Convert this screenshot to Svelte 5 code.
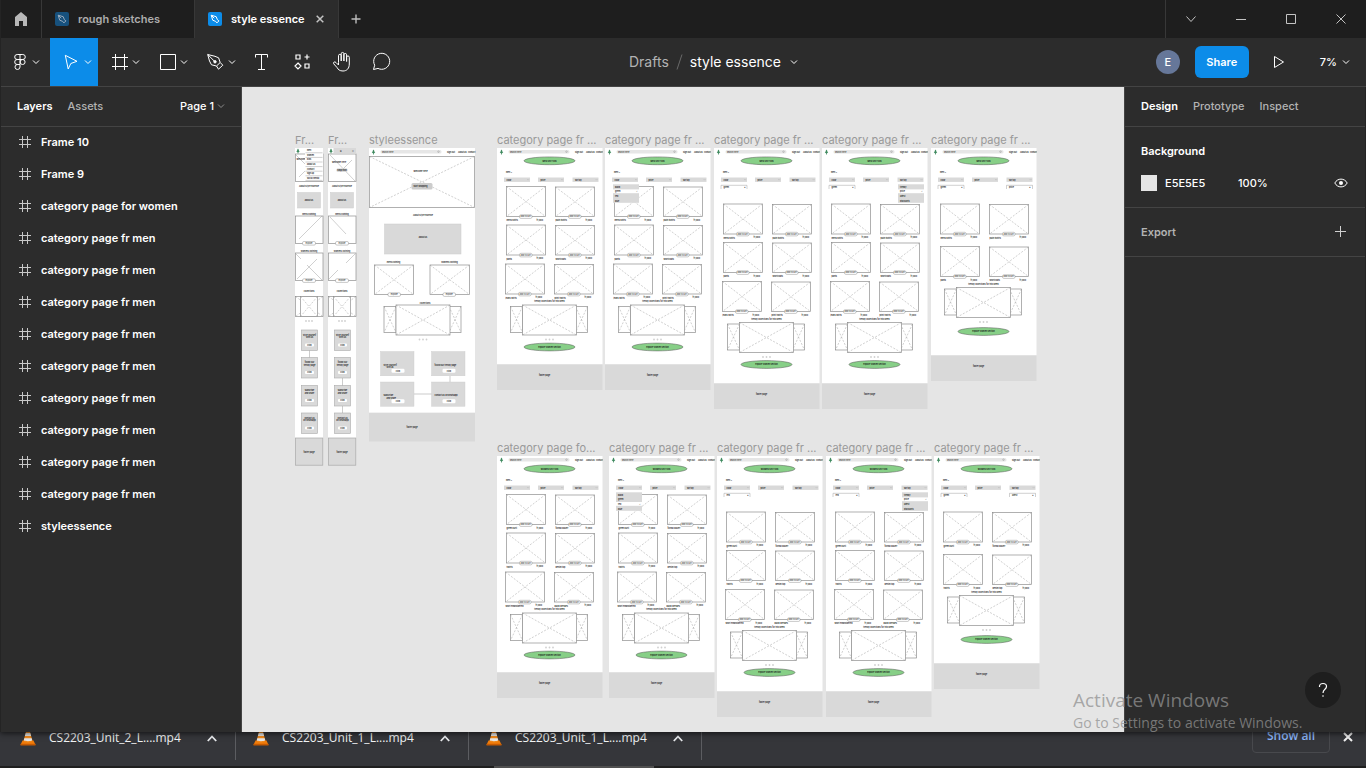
<script>
  const layers = [
    'Frame 10', 'Frame 9', 'category page for women',
    ...Array(9).fill('category page fr men'), 'styleessence'
  ];
  const downloads = ['CS2203_Unit_2_L....mp4', 'CS2203_Unit_1_L....mp4', 'CS2203_Unit_1_L....mp4'];

  const shortRows = [38.5, 77, 116];
  const tallRows = [56, 94.5, 133.5];
  const pairRows = [56, 98.5];
  const mens = ['MEN SECTION', 'mens shirts', 'plain tshirts', 'pants', 'shortcoats', 'jeans shirts', 'print tshirts'];
  const womens = ['WOMEN SECTION', 'green kurti', 'formal blazer', 'tshirts', 'denim top', 'short embroidered', 'black dresses'];
  const colours = ['black', 'green', 'red', 'blue'];
  const sorts = ['trendy', 'price', 'latest', 'discounts'];

  const boards = [
    { x: 255, y: 61, name: 'category page fr ...', words: mens, rows: shortRows, top: 157, end: 216, h: 242 },
    { x: 363, y: 61, name: 'category page fr ...', words: mens, rows: shortRows, top: 157, end: 216, h: 242, menuX: 8, menu: colours, active: 1 },
    { x: 472, y: 61, name: 'category page fr ...', words: mens, rows: tallRows, top: 174.5, end: 235, h: 261, chip: 'green' },
    { x: 580, y: 61, name: 'category page fr ...', words: mens, rows: tallRows, top: 174.5, end: 235, h: 261, chip: 'green', menuX: 76, menu: sorts, active: 1 },
    { x: 689, y: 61, name: 'category page fr ...', words: mens, rows: pairRows, top: 139.5, end: 207, h: 233, chip: 'green', chip2: 'price' },
    { x: 255, y: 369, name: 'category page fo...', words: womens, rows: shortRows, top: 157, end: 216, h: 242 },
    { x: 367, y: 369, name: 'category page fr ...', words: womens, rows: shortRows, top: 157, end: 216, h: 242, menuX: 7, menu: colours, active: 2 },
    { x: 475, y: 369, name: 'category page fr ...', words: womens, rows: tallRows, top: 174.5, end: 235, h: 261, chip: 'red' },
    { x: 584, y: 369, name: 'category page fr ...', words: womens, rows: tallRows, top: 174.5, end: 235, h: 261, chip: 'red', menuX: 76, menu: sorts, active: 1 },
    { x: 692, y: 369, name: 'category page fr ...', words: womens, rows: pairRows, top: 139.5, end: 207, h: 233, chip: 'green', chip2: 'latest' }
  ];
  const phoneBoxes = [182, 209.5, 237.5, 265];
  const steps = [
    ['style yourself', 'with us'], ['follow our', 'trendy page'], ['subscribe', 'and share'], ['contact us', 'on whatsapp']
  ];
</script>

{#snippet chevron(cls)}
  <svg class="chev {cls}" viewBox="0 0 8 8" aria-hidden="true"><path d="M1 2.5l3 3 3-3" /></svg>
{/snippet}

{#snippet leaf(x, y)}
  <path class="leaf" d="M{x} {y - 2.6}l1.2 2-.6.4 1.2 1-1.4.4v1.2h-.8v-1.2l-1.4-.4 1.200-1-.6-.4z" />
{/snippet}

{#snippet picture(x, y, w, h)}
  <rect class="pic" {x} {y} width={w} height={h} />
  <path class="cross" d="M{x} {y}l{w} {h}M{x + w} {y}l{-w} {h}" />
{/snippet}

{#snippet pill(x, y, w, text)}
  <rect class="pill" {x} {y} width={w} height="3.6" rx="1.4" />
  <text class="mid" x={x + w / 2} y={y + 2.6}>{text}</text>
{/snippet}

{#snippet gallery(x, y)}
  {@render picture(x, y + 1.5, 12, 26)}
  {@render picture(x + 65, y + 1.5, 12, 26)}
  <rect x={x + 12} {y} width="54" height="30" fill="#fff" />
  {@render picture(x + 12, y, 54, 30)}
  {#each [36, 39.5, 43] as d}
    <circle class="dot" cx={x + d - 0.5} cy={y + 34.5} r=".9" />
  {/each}
{/snippet}

{#snippet pageTop()}
  {@render leaf(4.5, 4)}
  <rect class="search" x="11.5" y="2" width="61" height="3.6" rx="1.6" />
  <text x="13" y="4.6">search here</text>
  <circle class="line" cx="69.5" cy="3.7" r=".8" />
  <text class="dark" x="78" y="4.6">Sign out</text>
  <text class="dark" x="89" y="4.6">About us</text>
  <text class="dark" x="99" y="4.6">contact</text>
{/snippet}

{#snippet category(b)}
  <svg width="106" height={b.h} viewBox="0 0 106 {b.h}">
    <rect width="105.5" height={b.end} fill="#fff" />
    <rect y={b.end + 0.7} width="105.5" height={b.h - b.end - 0.7} fill="#d9d9d9" />
    {@render pageTop()}
    <ellipse class="badge" cx="52.5" cy="12.8" rx="25.5" ry="3.9" />
    <text class="mid dark" x="52.5" y="13.7">{b.words[0]}</text>
    <text class="dark" x="9" y="25">men &gt;</text>
    {#each ['color', 'price', 'sort by'] as f, i}
      <rect x={[7, 41, 75.5][i]} y="29.5" width="26" height="4.4" fill="#d9d9d9" />
      <text class="dark" x={[9.5, 43.5, 78][i]} y="32.5">{f}</text>
      <path class="line" d="M{[30.5, 64.5, 99][i]} 31.5l.6.6.6-.6" />
    {/each}
    {#each [[b.chip, 7], [b.chip2, 75.5]] as [label, x]}
      {#if label}
        <path class="line" d="M{x} 41v-3.7h26v3.7" />
        <text class="dark" x={x + 2.5} y="39.8">{label}</text>
        <text class="dark" x={x + 22.5} y="39.9">✕</text>
      {/if}
    {/each}
    {#each b.rows as y, i}
      {#each [9.5 - (i === 2 ? 1 : 0), 58.5 - (i === 2 ? 1 : 0)] as x, j}
        {@render picture(x, y + (j ? 0.5 : 0), 39, 30 - (j ? 0.5 : 0))}
        {@render pill(x + 13, y + 28.3, 12.5, 'add to cart')}
        <text class="dark" {x} y={y + 34.5}>{b.words[1 + i * 2 + j]}</text>
        <text class="dark" x={x + 30} y={y + 34}>₹1,000</text>
      {/each}
    {/each}
    <text class="mid dark" x="52.5" y={b.top - 2.6}>trendy collections for this week</text>
    {@render gallery(13.5, b.top)}
    <ellipse class="badge" cx="52.5" cy={b.top + (b.chip2 ? 44 : 42)} rx="25.5" ry="3.9" />
    <text class="mid dark" x="52.5" y={b.top + (b.chip2 ? 44.9 : 42.9)}>explore women section</text>
    <text class="mid dark" x="47.5" y={b.end + 11.5}>footer page</text>
    {#if b.menu}
      <rect x={b.menuX} y="36.3" width="26" height="18.5" fill="#d9d9d9" />
      <rect x={b.menuX} y={36.8 + b.active * 4.6} width="26" height="3.8" fill="#fff" />
      {#each b.menu as item, i}
        <text class="dark" x={b.menuX + 2} y={39.8 + i * 4.6}>{item}</text>
      {/each}
      <text x={b.menuX + 22.5} y={39.8 + b.active * 4.6}>✕</text>
    {/if}
  </svg>
{/snippet}

{#snippet phone(second)}
  <svg width="29" height="318" viewBox="0 0 29 318">
    <rect width="28" height="290" fill="#fff" />
    {#if second}<rect x="5.5" width="22.5" height="5" fill="#d9d9d9" />{/if}
    {@render leaf(3, 3)}
    <rect class="pic" x=".5" y="6" width="27.5" height="27.5" />
    {#if second}
      <path class="cross solid" d="M2 7l25 26M24 12L12 24" />
      <text class="mid dark" x="11" y="15">Welcome Here</text>
      <rect x="8.5" y="20.5" width="11" height="3.2" rx="1.2" fill="#d0d0d0" />
      <text class="mid dark" x="14" y="22.9">shop now</text>
      <text class="dark" x="12" y="3.8">Q</text>
      <text class="dark" x="24" y="4">☰</text>
    {:else}
      <path class="cross solid" d="M1 7l9 9M4 29l6-6" />
      <text class="dark" x="1.5" y="12">Welcome</text>
      <rect x="10" y=".5" width="18" height="32.5" fill="#fff" />
      {#each ['men', 'women', 'kids', 'about us', 'contact', 'sign up', 'social media'] as item, i}
        <text class="dark" x="12" y={3.2 + i * 4.6}>{item}</text>
        <path class="line" d="M10.5 {4.8 + i * 4.6}h17" />
      {/each}
    {/if}
    <text class="mid dark" x="14" y="38.8">About Style Essence</text>
    <rect x="2.5" y="44.5" width="23" height="15.5" fill="#d9d9d9" stroke="#ccc" stroke-width=".5" />
    <text class="mid dark" x="14" y="52.5">about us</text>
    <text class="mid dark" x="14" y="66.8">mens clothing</text>
    <rect class="pic" x=".5" y="68" width="27.5" height="27.5" />
    <path class="cross solid" d={second ? 'M2 69l16 17' : 'M4 91l23-23'} />
    {@render pill(7.5, 93.5, 13, 'explore')}
    <text class="mid dark" x="14" y="104">womens clothing</text>
    <rect class="pic" x=".5" y="105" width="27.5" height="27.5" />
    <path class="cross solid" d={second ? 'M27 106l-9 9M10 122l-9 9' : 'M1 106l5 5M22 111L2 131M12 117l15 15'} />
    {@render pill(7.5, 130.8, 13, 'explore')}
    <text class="mid dark" x="14" y="143.5">collections</text>
    {@render picture(0.5, 148.5, 27.5, 20)}
    <rect x="5.5" y="148.5" width="17" height="20" fill="#fff" />
    {@render picture(5.5, 148.5, 17, 20)}
    {#each [11, 14, 17] as d}<circle class="dot" cx={d} cy="173" r=".9" />{/each}
    <path class="join" d={second ? 'M14.5 230v8M14.5 257v8' : 'M14.5 202v8'} />
    {#each phoneBoxes as y, i}
      <rect x="6.5" {y} width="16" height="20.5" fill="#d9d9d9" stroke="#aaa" stroke-width=".6" />
      <text class="mid dark" x="14.5" y={y + 5.5}>{steps[i][0]}</text>
      <text class="mid dark" x="14.5" y={y + 8.2}>{steps[i][1]}</text>
      <rect x="10" y={y + 13.5} width="9" height="3" rx="1" fill="#fff" />
      <text class="mid dark" x="14.5" y={y + 15.8}>click</text>
    {/each}
    <rect x=".4" y="290" width="27.4" height="27.2" fill="#d9d9d9" stroke="#aaa" stroke-width=".7" />
    <text class="mid dark" x="14" y="304.5">footer page</text>
  </svg>
{/snippet}

{#snippet home()}
  <svg width="107" height="294" viewBox="0 0 107 294">
    <rect width="106" height="264.5" fill="#fff" />
    <rect y="265" width="106" height="28.5" fill="#d9d9d9" />
    {@render pageTop()}
    {@render picture(0.5, 8.5, 105, 51)}
    <text class="mid dark" x="51.5" y="23.8">Welcome Here</text>
    <rect x="42.5" y="35" width="21" height="6.5" rx="1.5" fill="#ccc" />
    <text class="mid dark" x="51.5" y="39">start shopping</text>
    <text class="mid dark" x="54" y="67.8">About Style Essence</text>
    <rect x="15.5" y="76" width="76.5" height="30" fill="#d9d9d9" stroke="#ccc" stroke-width=".5" />
    <text class="mid dark" x="54" y="89.8">about us</text>
    <text class="mid dark" x="24.5" y="115">mens clothing</text>
    <text class="mid dark" x="80.5" y="115">womens clothing</text>
    {@render picture(5.5, 117, 39, 29.5)}
    {@render picture(61, 117, 39.5, 29.5)}
    {@render pill(19, 144.8, 12.5, 'explore')}
    {@render pill(74, 144.8, 12.5, 'explore')}
    <text class="mid dark" x="56" y="155.6">collections</text>
    {@render gallery(15, 157)}
    <path class="join" d="M81 228v6M45 246h18" />
    {#each [[11.5, 203.5], [62.5, 203.5], [11.5, 234], [62.5, 234]] as [x, y], i}
      <rect {x} {y} width="33.5" height="24.3" fill="#d9d9d9" stroke="#ccc" stroke-width=".4" />
      <text class="dark" x={x + 3} y={y + 14}>{steps[i][0]} {i % 2 ? steps[i][1] : ''}</text>
      {#if i % 2 === 0}<text class="dark" x={x + 6} y={y + 16.5}>{steps[i][1]}</text>{/if}
      <rect x={x + 11} y={y + 17.2} width="13" height="4" rx="1.2" fill="#fff" />
      <text class="mid dark" x={x + 17.5} y={y + 20}>click</text>
    {/each}
    <text class="mid dark" x="43" y="279.5">footer page</text>
  </svg>
{/snippet}

{#snippet nib()}
  <path d="M3.200 3.200l1.500 5 3 1.200 1.200 1.500 2-2-1.500-1.200-1.200-3zM3.200 3.200l3 3" />
{/snippet}

<div class="screen">
  <div class="window">
    <div class="titlebar">
      <button class="home" aria-label="Home">
        <svg width="14" height="14" viewBox="0 0 14 14"><path d="M7 0L13 5v9H9V9H5v5H1V5z" fill="#b8b8b8" /></svg>
      </button>
      <button class="tab">
        <svg class="file dim" width="14" height="14" viewBox="0 0 14 14"><rect width="14" height="14" rx="2" fill="#17517d" />{@render nib()}</svg>
        <span>rough sketches</span>
      </button>
      <div class="tab active">
        <svg class="file" width="14" height="14" viewBox="0 0 14 14"><rect width="14" height="14" rx="2" fill="#0c8ce9" />{@render nib()}</svg>
        <span>style essence</span>
        <button class="close" aria-label="Close tab"><svg width="8" height="8" viewBox="0 0 8 8"><path d="M.7.7l6.600 6.600M7.300.7L.7 7.300" stroke="#c4c4c4" stroke-width="1.500" /></svg></button>
      </div>
      <button class="new" aria-label="New tab"><svg width="10" height="10" viewBox="0 0 10 10"><path d="M5 .5v9M.5 5h9" stroke="#bdbdbd" stroke-width="1.400" /></svg></button>
      <div class="winbtns">
        <button aria-label="Tab list"><svg viewBox="0 0 10 10"><path d="M.5 2.500L5 7.500l4.500-5" /></svg></button>
        <button aria-label="Minimize"><svg viewBox="0 0 10 10"><path d="M0 5.500h10" /></svg></button>
        <button aria-label="Maximize"><svg viewBox="0 0 10 10"><path d="M.5.5h9v9h-9z" /></svg></button>
        <button aria-label="Close"><svg viewBox="0 0 10 10"><path d="M.5.5l9 9M9.500.5l-9 9" /></svg></button>
      </div>
    </div>

    <header class="toolbar">
      <div class="tools">
        <button class="tool menu" aria-label="Main menu">
          <svg viewBox="0 0 24 24"><path d="M12 4.500H9.200a2.500 2.500 0 0 0 0 5H12zM12 4.500h2.800a2.500 2.500 0 0 1 0 5H12M12 9.500H9.200a2.500 2.500 0 0 0 0 5H12zM12 14.500H9.200a2.500 2.500 0 1 0 2.800 2.500z" /><circle cx="14.600" cy="12" r="2.500" /></svg>
          {@render chevron('')}
        </button>
        <button class="tool on" aria-label="Move">
          <svg viewBox="0 0 24 24"><path d="M5.300 5.300l11.700 6-6.200 2.200-2.600 5.500z" /></svg>
          {@render chevron('')}
        </button>
        <button class="tool" aria-label="Frame">
          <svg viewBox="0 0 24 24"><path d="M7.500 4v16M16.500 4v16M4 7.500h16M4 16.500h16" /></svg>
          {@render chevron('')}
        </button>
        <button class="tool" aria-label="Rectangle">
          <svg viewBox="0 0 24 24"><path d="M4.500 4.500h15v15h-15z" /></svg>
          {@render chevron('')}
        </button>
        <button class="tool" aria-label="Pen">
          <svg viewBox="0 0 24 24"><path d="M3.700 4.500l1.800 6.500 2 3.800 5 1.200 2 3.200 4.300-4-2.600-2.700-1.600-4.700-3.600-1.500zM3.700 4.500l6.300 6.300M12.500 16l3.700-3.500" /><circle cx="11" cy="11.800" r="1.200" fill="#fff" /></svg>
          {@render chevron('')}
        </button>
        <button class="tool small" aria-label="Text">
          <svg viewBox="0 0 24 24"><path d="M5.500 7.500v-3h12v3M11.500 4.500v15M8 19.500h7" /></svg>
        </button>
        <button class="tool small" aria-label="Resources">
          <svg viewBox="0 0 24 24"><path d="M5.500 4.500h4v4h-4zM14.500 13.500h4v4h-4zM16.500 4v5M14 6.500h5M7.500 12.500l3 3-3 3-3-3z" transform="translate(.5 .5)" stroke-width="1.200" /></svg>
        </button>
        <button class="tool small" aria-label="Hand">
          <svg viewBox="0 0 24 24"><path d="M8.500 12.500V5.700a1.300 1.300 0 0 1 2.700 0V11V3.800a1.300 1.300 0 0 1 2.700 0V11 4.800a1.300 1.300 0 0 1 2.700 0V11.500 7.300a1.300 1.300 0 0 1 2.700 0V14c0 4.500-2.500 7-6.300 7-3.500 0-4.800-1.500-6-3.500L3.700 13.800c-.8-1.700 1-2.600 2.300-1.300l2.500 2.500z" /></svg>
        </button>
        <button class="tool small" aria-label="Comment">
          <svg viewBox="0 0 24 24"><path d="M3.500 19.500l1.200-4.300a8 8 0 1 1 3.300 3.200z" /></svg>
        </button>
      </div>
      <div class="crumb">
        <a href="#drafts">Drafts</a>
        <svg width="7" height="16" viewBox="0 0 7 16"><path d="M6 .5L1 15.500" stroke="#6a6a6a" fill="none" /></svg>
        <span>style essence</span>
        {@render chevron('')}
      </div>
      <div class="actions">
        <span class="avatar">E</span>
        <button class="share">Share</button>
        <button class="play" aria-label="Present"><svg width="12" height="14" viewBox="0 0 12 14"><path d="M1.500 1.500l9 5.500-9 5.500z" fill="none" stroke="#fff" /></svg></button>
        <button class="zoom"><span>7%</span>{@render chevron('')}</button>
      </div>
    </header>

    <div class="body">
      <aside class="left">
        <div class="tabs">
          <button class="sel">Layers</button>
          <button>Assets</button>
          <button class="page"><span>Page 1</span>{@render chevron('grey')}</button>
        </div>
        <ul>
          {#each layers as layer}
            <li>
              <svg width="12" height="12" viewBox="0 0 12 12"><path d="M3.500 0v12M8.500 0v12M0 3.500h12M0 8.500h12" stroke="#c8c8c8" /></svg>
              <span>{layer}</span>
            </li>
          {/each}
        </ul>
      </aside>

      <main class="canvas">
        <section class="board" style="left: 53px; top: 61px">
          <h2>Fr...</h2>{@render phone(false)}
        </section>
        <section class="board" style="left: 86px; top: 61px">
          <h2>Fr...</h2>{@render phone(true)}
        </section>
        <section class="board" style="left: 127px; top: 61px">
          <h2>styleessence</h2>{@render home()}
        </section>
        {#each boards as b}
          <section class="board" style="left: {b.x}px; top: {b.y}px">
            <h2>{b.name}</h2>{@render category(b)}
          </section>
        {/each}
      </main>

      <aside class="right">
        <div class="tabs">
          <button class="sel">Design</button>
          <button>Prototype</button>
          <button>Inspect</button>
        </div>
        <section class="bg">
          <h3>Background</h3>
          <div class="fill">
            <i class="swatch"></i>
            <span class="hex">E5E5E5</span>
            <span>100%</span>
            <button aria-label="Toggle visibility"><svg width="14" height="10" viewBox="0 0 14 10"><path d="M.8 5C3.500-.2 10.500-.2 13.200 5 10.500 10.200 3.500 10.200.8 5z" fill="none" stroke="#fff" /><circle cx="7" cy="5" r="2" fill="#fff" /></svg></button>
          </div>
        </section>
        <section class="export">
          <span>Export</span>
          <button aria-label="Add export"><svg width="12" height="12" viewBox="0 0 12 12"><path d="M5.500 0v11M0 5.500h11" stroke="#d0d0d0" /></svg></button>
        </section>
        <button class="help" aria-label="Help"><svg width="10" height="16" viewBox="0 0 10 16"><path d="M1.500 5V4.500C1.500.5 8.500.5 8.500 4.500 8.500 7.500 5 7 5 11" fill="none" stroke="#fff" stroke-width="1.200" /><circle cx="5" cy="14" r=".8" fill="#fff" /></svg></button>
      </aside>
    </div>
    <div class="watermark">
      <p class="big">Activate Windows</p>
      <p>Go to Settings to activate Windows.</p>
    </div>
  </div>

  <footer class="downloads">
    {#each downloads as file}
      <div class="item">
        <svg width="16" height="16" viewBox="0 0 16 16">
          <path d="M2.500 10.500h11l2 4.500H.5z" fill="#f07c0a" /><path d="M.5 13.800h15V15.500H.5z" fill="#c75a00" />
          <path d="M6.500 0h3l3 11c-1.500 1.800-7.500 1.800-9 0z" fill="#f28a1c" /><path d="M5.700 3h4.600l.8 3H4.900zM4.300 8.300h7.400l.5 2c-2 1.200-6.400 1.200-8.400 0z" fill="#e6e6e6" />
        </svg>
        <span>{file}</span>
        <button aria-label="File options"><svg width="10" height="7" viewBox="0 0 10 7"><path d="M.8 6L5 1.500 9.200 6" fill="none" stroke="#e8eaed" stroke-width="1.800" /></svg></button>
      </div>
    {/each}
    <button class="all">Show all</button>
    <button class="shut" aria-label="Close downloads"><svg width="10" height="10" viewBox="0 0 10 10"><path d="M1 1l8 8M9 1L1 9" stroke="#f1f1f1" stroke-width="2" /></svg></button>
    <div class="scroll"></div>
  </footer>
</div>

<style>
  :global(body) { margin: 0; background: #35363a; }
  .screen {
    display: flex; flex-direction: column; height: 100vh; overflow: hidden;
    font: 500 11px/16px Inter, sans-serif; color: #fff;
  }
  button { border: 0; padding: 0; background: none; color: inherit; font: inherit; display: flex; align-items: center; }
  h2, h3, p, ul { margin: 0; padding: 0; font: inherit; }
  svg { display: block; flex: none; }

  .window { position: relative; flex: 1; min-height: 0; display: flex; flex-direction: column; background: #2c2c2c; z-index: 1; border-left: 1px solid #242424; box-shadow: 0 1px 6px rgba(0, 0, 0, .7); }

  .titlebar { display: flex; height: 38px; background: #1e1e1e; }
  .home { width: 41px; justify-content: center; border-right: 1px solid #383838; }
  .tab { display: flex; align-items: center; width: 152px; padding-left: 13px; gap: 9px; box-sizing: border-box; color: #adadad; font-weight: 600; }
  .tab.active { width: 145px; background: #2c2c2c; color: #fff; border: solid #383838; border-width: 0 1px; }
  .file path { fill: none; stroke: #fff; }
  .dim path { stroke: #9ab; }
  .close { margin-left: 2px; }
  .new { width: 34px; justify-content: center; }
  .winbtns { display: flex; margin-left: auto; border-left: 1px solid #383838; }
  .winbtns button { width: 50px; justify-content: center; }
  .winbtns svg { width: 10px; height: 10px; fill: none; stroke: #c4c4c4; }

  .toolbar { display: grid; grid-template-columns: 1fr auto 1fr; height: 48px; border-bottom: 1px solid #444; }
  .tools { display: flex; }
  .tool { width: 48px; padding-left: 10px; }
  .tool.menu { width: 49px; padding-left: 7px; }
  .tool.small { width: 40px; padding: 0; justify-content: center; }
  .tool > svg:first-child { width: 24px; height: 24px; fill: none; stroke: #fff; }
  .on { background: #0c8ce9; }
  .chev { width: 8px; height: 8px; fill: none; stroke: #fff; }
  .chev.grey { stroke: #8c8c8c; }
  .crumb { display: flex; align-items: center; gap: 7px; padding-left: 60px; font-size: 14px; font-weight: 400; white-space: nowrap; }
  .crumb a { color: #b3b3b3; text-decoration: none; }
  .crumb .chev { margin-left: 2px; }
  .actions { display: flex; justify-content: flex-end; align-items: center; }
  .avatar { width: 24px; height: 24px; border-radius: 50%; background: #667799; line-height: 24px; text-align: center; }
  .share { height: 32px; width: 54px; justify-content: center; margin-left: 15px; border-radius: 6px; background: #0c8ce9; font-weight: 600; }
  .play { margin-left: 24px; }
  .zoom { margin: 0 16px 0 35px; gap: 5px; }

  .body { flex: 1; min-height: 0; display: flex; }
  .left { width: 240px; border-right: 1px solid #444; }
  .right { width: 240px; border-left: 1px solid #444; border-right: 1px solid #242424; position: relative; }
  .tabs { display: flex; align-items: center; height: 37px; padding: 0 16px 2px; gap: 15px; border-bottom: 1px solid #444; color: #b3b3b3; }
  .tabs .sel { color: #fff; font-weight: 600; }
  .tabs .page { margin-left: auto; gap: 3px; color: #fff; }
  li { display: flex; align-items: center; height: 30px; padding: 0 0 2px 18px; gap: 10px; font-weight: 600; }

  .canvas { flex: 1; position: relative; overflow: hidden; background: #e5e5e5; }
  .board { position: absolute; }
  .board h2 { position: absolute; bottom: 100%; left: 0; line-height: 15px; white-space: nowrap; color: #999; font-weight: 400; }
  .board text { font-size: 2px; font-weight: 500; fill: #333; }
  .board .dark { fill: #111; font-weight: 600; }
  .board .mid { text-anchor: middle; }
  .board .pic { fill: none; stroke: #8f8f8f; stroke-width: .7; }
  .board .cross { fill: none; stroke: #888; stroke-width: .4; stroke-dasharray: 2 1.500; }
  .board .cross.solid { stroke-dasharray: none; }
  .board .pill { fill: #fff; stroke: #777; stroke-width: .4; }
  .board .dot { fill: #d0d0d0; }
  .board .search { fill: #e6e6e6; }
  .board .leaf { fill: #3f8a5f; }
  .board .line { fill: none; stroke: #888; stroke-width: .4; }
  .board .join { fill: none; stroke: #aaa; stroke-width: .6; }
  .board .badge { fill: #87cf87; stroke: #555; stroke-width: .5; }

  .bg { padding: 16px; border-bottom: 1px solid #444; }
  .bg h3 { font-weight: 600; }
  .fill { display: flex; align-items: center; margin-top: 16px; }
  .fill button { margin: 0 1px 0 auto; }
  .swatch { width: 16px; height: 16px; margin-right: 8px; background: #e5e5e5; }
  .hex { width: 73px; }
  .export { display: flex; justify-content: space-between; align-items: center; height: 48px; padding: 0 18px 0 16px; border-bottom: 1px solid #444; color: #b3b3b3; font-weight: 600; }
  .help { position: absolute; right: 24px; bottom: 24px; width: 36px; height: 36px; justify-content: center; border-radius: 50%; background: #1e1e1e; }
  .watermark { position: absolute; left: 1072px; bottom: 0; font: 400 14px/18px 'Open Sans', sans-serif; color: rgba(145, 145, 145, .75); white-space: nowrap; pointer-events: none; }
  .watermark .big { font-size: 19px; line-height: 28px; }

  .downloads { position: relative; display: flex; height: 36px; padding-left: 3px; background: #35363a; font: 400 12px/16px 'Open Sans', sans-serif; color: #f1f3f4; }
  .item { display: flex; align-items: center; width: 215px; height: 28px; padding-left: 17px; border-right: 1px solid #5c5d61; }
  .item > svg { margin: -16px 13px 0 0; }
  .item span { margin-top: -16px; }
  .item button { margin: -16px 18px 0 auto; }
  .all { height: 34px; width: 78px; margin: -13px 0 0 auto; justify-content: center; border: 1px solid #48494d; border-radius: 4px; box-sizing: border-box; color: #8ab4f8; font-weight: 600; }
  .shut { height: 10px; margin: 0 13px; }
  .scroll { position: absolute; left: 0; right: 0; bottom: 0; height: 2px; background: linear-gradient(90deg, #1f1f1f 494px, #505050 494px 654px, #1f1f1f 654px); }
</style>
